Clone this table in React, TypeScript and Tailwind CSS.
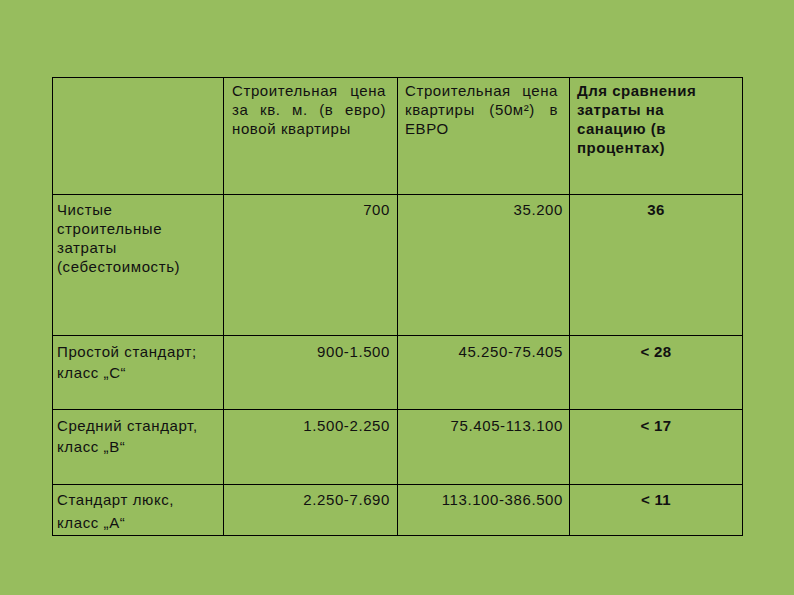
import React from "react";

const cell = "border-r border-b border-black overflow-hidden";

export default function App() {
  return (
    <div
      className="w-[794px] h-[595px] bg-[#97bd5e] pt-[77px] pl-[52px] text-[15px] text-[#111] tracking-[0.6px]"
      style={{ fontFamily: '"Liberation Sans", Arial, sans-serif' }}
    >
      <div className="grid grid-cols-[171px_174px_172px_173px] grid-rows-[117px_141px_74px_75px_51px] w-[691px] border-l border-t border-black">
        {/* Header row */}
        <div className={cell}></div>
        <div className={`${cell} pt-[3px] pl-[8px] pr-[11px] leading-[19px] text-justify`}>
          Строительная цена за кв. м. (в евро) новой квартиры
        </div>
        <div className={`${cell} pt-[3px] pl-[7px] pr-[11px] leading-[19px] text-justify`}>
          Строительная цена квартиры (50м²) в ЕВРО
        </div>
        <div className={`${cell} pt-[3px] pl-[7px] pr-[8px] leading-[19px] font-bold tracking-[0.5px]`}>
          Для сравнения
          <br />
          затраты на
          <br />
          санацию (в
          <br />
          процентах)
        </div>

        {/* Row 2 */}
        <div className={`${cell} pt-[5px] pl-[4px] leading-[19px]`}>
          Чистые
          <br />
          строительные
          <br />
          затраты
          <br />
          (себестоимость)
        </div>
        <div className={`${cell} pt-[5px] pr-[7px] leading-[19px] text-right`}>700</div>
        <div className={`${cell} pt-[5px] pr-[6px] leading-[19px] text-right`}>35.200</div>
        <div className={`${cell} pt-[5px] leading-[19px] text-center font-bold tracking-[0.3px]`}>36</div>

        {/* Row 3 */}
        <div className={`${cell} pt-[5px] pl-[4px] leading-[21px]`}>
          Простой стандарт;
          <br />
          класс „С“
        </div>
        <div className={`${cell} pt-[5px] pr-[7px] leading-[21px] text-right`}>900-1.500</div>
        <div className={`${cell} pt-[5px] pr-[6px] leading-[21px] text-right`}>45.250-75.405</div>
        <div className={`${cell} pt-[5px] leading-[21px] text-center font-bold tracking-[0.3px]`}>&lt; 28</div>

        {/* Row 4 */}
        <div className={`${cell} pt-[5px] pl-[4px] leading-[21px]`}>
          Средний стандарт,
          <br />
          класс „В“
        </div>
        <div className={`${cell} pt-[5px] pr-[7px] leading-[21px] text-right`}>1.500-2.250</div>
        <div className={`${cell} pt-[5px] pr-[6px] leading-[21px] text-right`}>75.405-113.100</div>
        <div className={`${cell} pt-[5px] leading-[21px] text-center font-bold tracking-[0.3px]`}>&lt; 17</div>

        {/* Row 5 */}
        <div className={`${cell} pt-[3px] pl-[4px] leading-[23px]`}>
          Стандарт люкс,
          <br />
          класс „А“
        </div>
        <div className={`${cell} pt-[3px] pr-[7px] leading-[23px] text-right`}>2.250-7.690</div>
        <div className={`${cell} pt-[3px] pr-[6px] leading-[23px] text-right`}>113.100-386.500</div>
        <div className={`${cell} pt-[3px] leading-[23px] text-center font-bold tracking-[0.3px]`}>&lt; 11</div>
      </div>
    </div>
  );
}
